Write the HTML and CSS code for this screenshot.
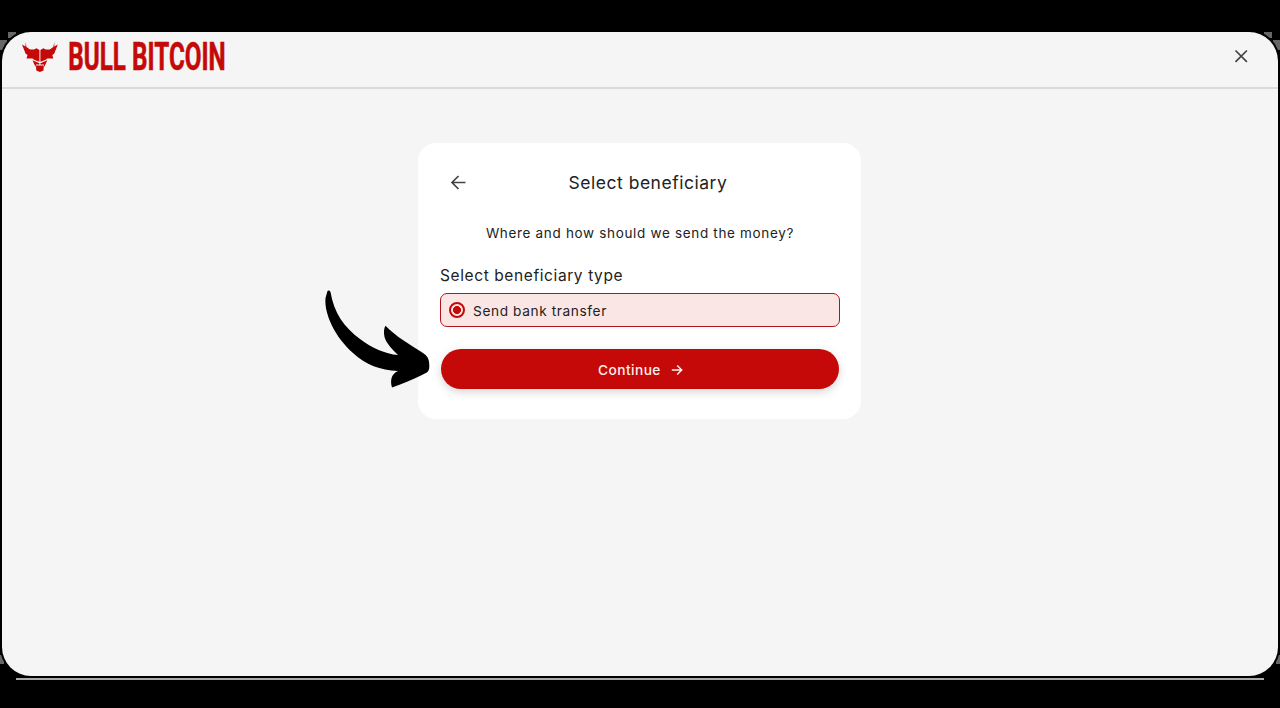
FILE: index.html
```html
<!DOCTYPE html>
<html lang="en">
<head>
<meta charset="utf-8">
<title>Select beneficiary</title>
<link rel="stylesheet" href="styles.css">
</head>
<body>
<div class="edge edge-bottom"></div>
<div class="edge corner-tl"></div>
<div class="edge corner-tl2"></div>
<div class="edge corner-tr"></div>
<div class="edge corner-tr2"></div>
<div class="edge corner-bl"></div>
<div class="edge corner-br"></div>
<div class="window">
  <header class="header">
    <svg class="logo" width="215" height="44" viewBox="0 0 215 44" role="img" aria-label="Bull Bitcoin">
      <g fill="#c50909">
        <path d="M4.500 4 5.500 9 9 11.500 13 11.500 15.500 10.300 18.400 12V23.800L13.500 22 11.500 20.500 5.500 20.500 6.500 17 4.500 15.500 1 6.500 4.500 8.500Z"/>
        <path d="M33.300 4 32.300 9 28.800 11.500 24.800 11.500 22.300 10.300 19.400 12V23.800L24.300 22 26.300 20.500 32.300 20.500 31.300 17 33.300 15.500 36.800 6.500 33.300 8.500Z"/>
        <path d="M11.500 22.300 18.400 25.300V26.500L15 26.500 14.500 29Z"/>
        <path d="M26.300 22.300 19.400 25.300V26.500L22.800 26.500 23.300 29Z"/>
        <path d="M15 27.500H22.800L22.500 32.500 18.900 34 15.300 32.500Z"/>
        <text class="wordmark" transform="translate(47.300 32) scale(.61 1)" textLength="258" lengthAdjust="spacingAndGlyphs">BULL BITCOIN</text>
      </g>
    </svg>
    <button class="icon-button" aria-label="Close">
      <svg width="14" height="14" viewBox="0 0 14 14"><path class="stroke" d="M1.500 1.500 12.900 12.900M12.900 1.500 1.500 12.900"/></svg>
    </button>
  </header>
  <main class="main">
    <section class="card">
      <div class="title-row">
        <button class="icon-button" aria-label="Back">
          <svg width="16" height="16" viewBox="0 0 16 16"><path class="stroke" d="M15.500 7.500H2.300M8.500 1 2 7.500 8.500 14"/></svg>
        </button>
        <h1 class="title">Select beneficiary</h1>
      </div>
      <p class="question">Where and how should we send the money?</p>
      <h2 class="label">Select beneficiary type</h2>
      <div class="option"><span class="radio"></span><span class="option-text">Send bank transfer</span></div>
      <button class="continue"><span>Continue</span>
        <svg width="12" height="12" viewBox="0 0 12 12"><path class="stroke-light" d="M.8 6H10.500M6.200 1.500 10.700 6 6.200 10.500"/></svg>
      </button>
    </section>
  </main>
</div>
<svg class="pointer" width="140" height="120" viewBox="0 0 140 120" aria-hidden="true">
  <path d="M17.500 11C18.500 10 20 10.500 20.500 12 24 33 34 47 50 59 62 68 75 74 88 75 83 70 76 63 74.500 57 73.500 52 74 48 75.500 45.800 86 57 101 65 113 73 119 77 119.300 81 119.300 87 119.300 92 116 93 112 95 102 100 92 104 82 107.500 80 101 81 94 88 91 70 90 56 85 43 73 25 57 14 34 15.500 18Z"/>
</svg>
</body>
</html>
```

FILE: styles.css
```css
* { box-sizing: border-box; }
body {
  margin: 0;
  width: 1280px;
  height: 708px;
  padding: 32px 2px;
  overflow: hidden;
  background: #000;
  color: #222;
  font-family: Inter, "Noto Sans", sans-serif;
}
.window {
  position: relative;
  height: 644px;
  border-radius: 29px;
  background: #f5f5f5;
  box-shadow: 0 0 0 2px #000;
  overflow: hidden;
}
.edge { position: absolute; background: #666; }
.edge-bottom { left: 16px; top: 678px; width: 1248px; height: 2px; background: #aaa; }
.corner-tl { left: 8px; top: 32px; width: 8px; height: 6px; }
.corner-tl2 { left: 0; top: 40px; width: 7px; height: 10px; }
.corner-tr { left: 1264px; top: 32px; width: 8px; height: 6px; }
.corner-tr2 { left: 1273px; top: 40px; width: 7px; height: 10px; }
.corner-bl { left: 0; top: 655px; width: 4px; height: 9px; }
.corner-br { left: 1276px; top: 655px; width: 4px; height: 9px; }
.header {
  display: flex;
  justify-content: space-between;
  align-items: flex-start;
  height: 57px;
  padding: 6px 30px 0 19px;
  border-bottom: 2px solid #dadada;
}
.logo { display: block; overflow: visible; }
.wordmark { font: 700 38.500px Roboto, sans-serif; stroke: #c50909; stroke-width: .6; }
.icon-button { display: flex; padding: 0; border: 0; background: none; }
.header .icon-button { margin-top: 11px; }
.stroke { fill: none; stroke: #444; stroke-width: 1.700; }
.main { display: flex; justify-content: center; padding: 54px 1px 0 0; }
.card {
  width: 443px;
  height: 276px;
  padding: 28px 21px 0 22px;
  border-radius: 18px;
  background: #fff;
}
.title-row { display: flex; align-items: center; height: 24px; padding-left: 10px; }
.title { margin: 0 0 0 102.500px; font-size: 17.500px; font-weight: 400; line-height: 24px; letter-spacing: .52px; white-space: nowrap; }
.question { margin: 27px 0 0; text-align: center; font-size: 13.500px; line-height: 22px; letter-spacing: .67px; white-space: nowrap; }
.label { margin: 20px 0 0; font-size: 15.500px; font-weight: 400; line-height: 24px; letter-spacing: .6px; }
.option {
  display: flex;
  align-items: center;
  gap: 8px;
  height: 34px;
  margin-top: 5px;
  padding: 0 8px;
  border: 1px solid #b3141b;
  border-radius: 7px;
  background: #fae6e5;
}
.radio {
  width: 16px;
  height: 16px;
  border: 2px solid #c50909;
  border-radius: 50%;
  background: radial-gradient(circle, #c50909 0 3.700px, transparent 4.300px);
}
.option-text { padding-top: 1px; font-size: 13.700px; letter-spacing: .6px; }
.continue {
  display: flex;
  align-items: center;
  justify-content: center;
  gap: 10px;
  width: 398px;
  height: 40px;
  margin: 22px 0 0 1px;
  padding: 1px 0 0 1px;
  border: 0;
  border-radius: 20px;
  background: #c50909;
  box-shadow: 0 3px 8px rgba(0, 0, 0, .17);
  color: #fff0ef;
  font: 500 13.700px Inter, sans-serif;
  letter-spacing: .45px;
}
.stroke-light { fill: none; stroke: #fff0ef; stroke-width: 1.500; }
.pointer { position: absolute; left: 310px; top: 280px; }
```
